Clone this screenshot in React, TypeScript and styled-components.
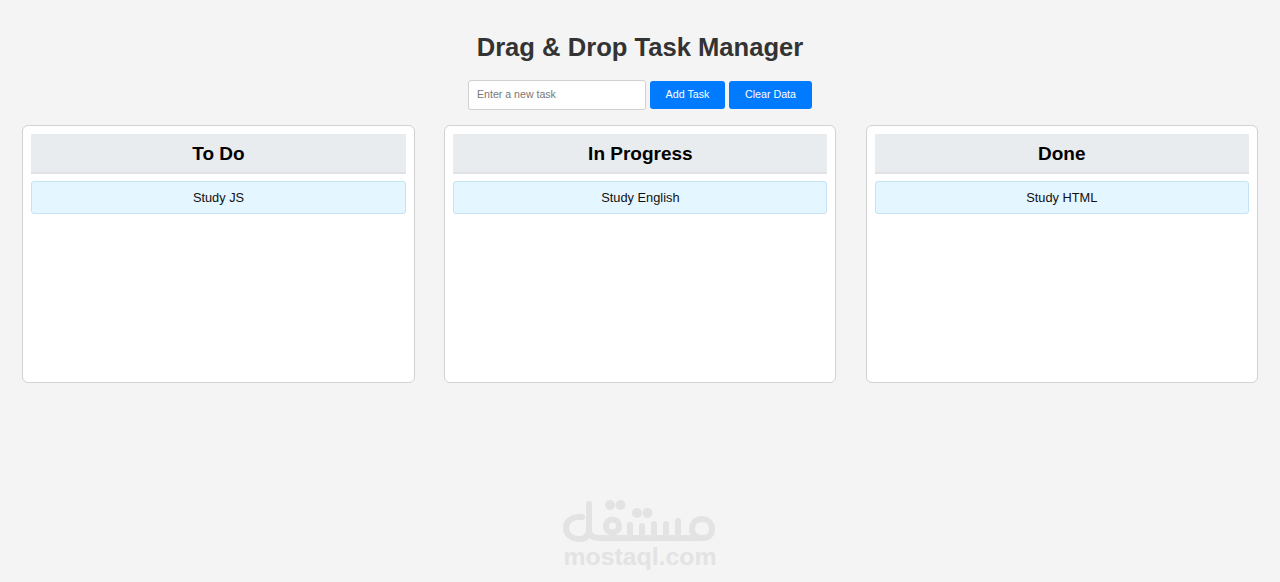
import React from "react";
import styled, { createGlobalStyle } from "styled-components";

const Global = createGlobalStyle`
  html, body { margin: 0; padding: 0; height: 100%; }
  body { background: #f4f4f4; font-family: "Liberation Sans", Arial, sans-serif; }
`;
const Page = styled.div`
  height: 582px; box-sizing: border-box; padding-top: 32px; display: flex; flex-direction: column; align-items: center; overflow: hidden;
`;
const Title = styled.h1`
  margin: 0; font-size: 25.6px; line-height: 30px; font-weight: 700; color: #333;
`;
const Form = styled.div`
  margin-top: 18px; display: flex; align-items: center; gap: 4px;
`;
const Input = styled.input`
  box-sizing: border-box; width: 178px; height: 30px; padding: 0 8px 2px; border: 1px solid #d0d0d0; border-radius: 3px;
  background: #fff; font: 10.6px "Liberation Sans", Arial, sans-serif;
  &::placeholder { color: #777; opacity: 1; }
`;
const Button = styled.button<{ $w: number }>`
  box-sizing: border-box; width: ${p => p.$w}px; height: 28px; padding: 0 0 2px; border: 0; border-radius: 3px;
  background: #007bff; color: #fff; font: 10.7px "Liberation Sans", Arial, sans-serif;
`;
const Board = styled.div`
  margin-top: 15px; width: 100%; box-sizing: border-box; padding: 0 22px; display: grid; grid-template-columns: 393px 392px 392px; column-gap: 29.4px;
`;
const Column = styled.section`
  box-sizing: border-box; height: 258px; padding: 8px; background: #fff; border: 1px solid #d2d2d2; border-radius: 6px;
  display: flex; flex-direction: column; gap: 7px;
`;
const ColumnTitle = styled.h3`
  box-sizing: border-box; margin: 0; height: 40px; line-height: 39px; text-align: center; font-size: 19px; font-weight: 700; color: #000; background: #e9ecef; border-bottom: 2px solid #e0e2e5;
`;
const Task = styled.div`
  box-sizing: border-box; height: 33px; line-height: 31px; text-align: center; font-size: 12.8px; color: #111; background: #e4f6ff; border: 1px solid #c4e3f3; border-radius: 3px;
`;
const Watermark = styled.div`
  margin-top: 117px; display: flex; flex-direction: column; align-items: center; color: #e3e3e3;
`;
const Logo = styled.svg`
  display: block; width: 154px; height: 46px;
`;
const Site = styled.div`
  margin-top: -1px; font-size: 24.8px; line-height: 24px; font-weight: 700; color: #e3e3e3;
`;

const columns = [
  { title: "To Do", task: "Study JS" },
  { title: "In Progress", task: "Study English" },
  { title: "Done", task: "Study HTML" },
];

export default function App() {
  return (
    <Page>
      <Global />
      <Title>Drag &amp; Drop Task Manager</Title>
      <Form>
        <Input placeholder="Enter a new task" />
        <Button $w={75}>Add Task</Button>
        <Button $w={83}>Clear Data</Button>
      </Form>
      <Board>
        {columns.map(c => (
          <Column key={c.title}>
            <ColumnTitle>{c.title}</ColumnTitle>
            <Task>{c.task}</Task>
          </Column>
        ))}
      </Board>
      <Watermark>
        <Logo viewBox="0 0 154 46" fill="none" stroke="currentColor" strokeWidth="6" strokeLinecap="round" strokeLinejoin="round">
          <path d="M19 17 C8 16 3 22 3 28 C3 35 9 39 17 39 C24 39 26 34 26 28 L26 4" />
          <path d="M26 31 C27 36 30 38 36 38 L127 38" />
          <circle cx="49.5" cy="26" r="6.5" />
          <path d="M67 25 L67 37 M79 26 L79 37 M91 24 L91 37 M103 24 L103 37 M115 21 L115 37" />
          <path d="M127 38 L140 38 C146 38 149 34 149 29 C149 23 145 19 139 19 C133 19 129 23 129 29 C129 34 133 38 140 38" />
          <g fill="currentColor" stroke="none">
            <circle cx="47" cy="5" r="5" /><circle cx="57.5" cy="5" r="5" />
            <circle cx="74" cy="13" r="5" /><circle cx="84.5" cy="13" r="5" />
          </g>
        </Logo>
        <Site>mostaql.com</Site>
      </Watermark>
    </Page>
  );
}
